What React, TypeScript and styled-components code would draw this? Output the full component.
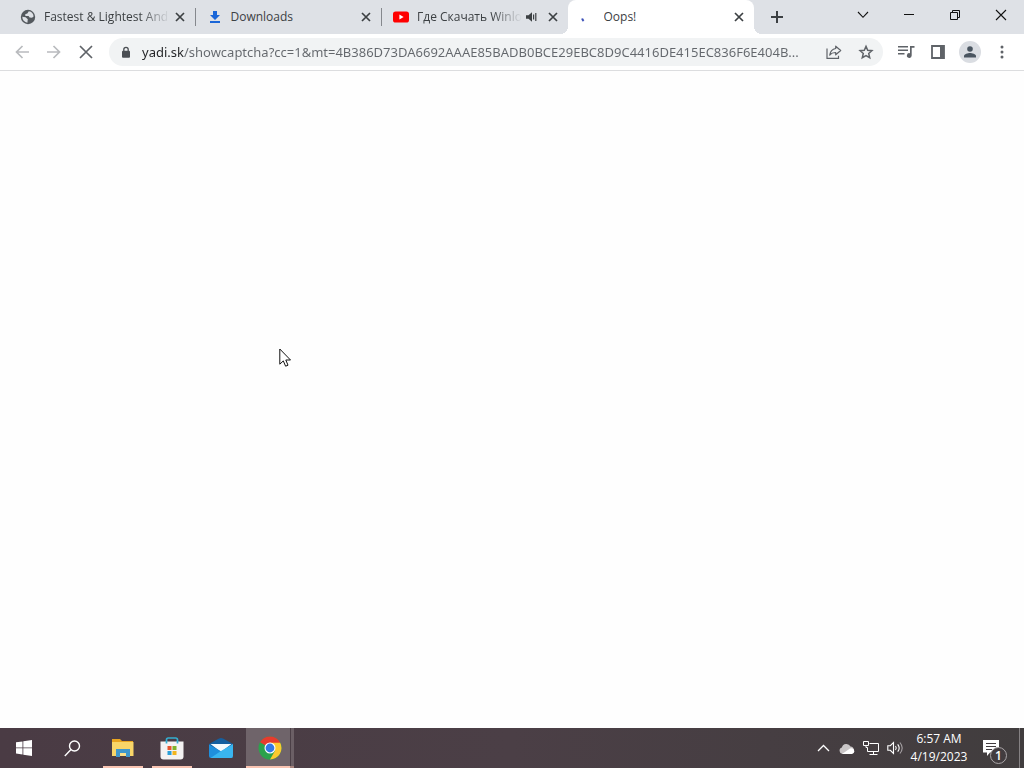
import React from "react";
import styled, { createGlobalStyle } from "styled-components";

const GlobalStyle = createGlobalStyle`
  * { box-sizing: border-box; }
  html, body, #root { height: 100%; }
  body {
    margin: 0;
    overflow: hidden;
    background: #fefefe;
    font-family: "Open Sans", "Noto Sans", sans-serif;
    font-size: 12px;
  }
  button { font: inherit; border: 0; padding: 0; background: none; color: inherit; }
  svg { display: block; flex: none; }
`;

const Desktop = styled.div`
  height: 100vh;
  display: flex;
  flex-direction: column;
`;

const TabStrip = styled.header`
  height: 34px;
  flex: none;
  display: flex;
  background: #dee1e6;
  padding-left: 8px;
`;

const Tabs = styled.div`
  display: flex;
  flex: 0 1 746px;
  min-width: 0;
`;

const Tab = styled.div<{ $active?: boolean }>`
  flex: 1 1 0;
  min-width: 0;
  display: flex;
  align-items: center;
  position: relative;
  padding: 0 7px 0 12px;
  color: #3c4043;
  background: ${(p) => (p.$active ? "#fff" : "transparent")};
  border-radius: 8px 8px 0 0;

  &::before, &::after {
    content: "";
    display: ${(p) => (p.$active ? "block" : "none")};
    position: absolute;
    bottom: 0;
    width: 8px;
    height: 8px;
  }
  &::before {
    left: -8px;
    background: radial-gradient(circle at 0 0, transparent 8px, #fff 8px);
  }
  &::after {
    right: -8px;
    background: radial-gradient(circle at 100% 0, transparent 8px, #fff 8px);
  }
`;

const Divider = styled.span`
  position: absolute;
  right: -1px;
  top: 8px;
  width: 1px;
  height: 18px;
  background: #85888d;
`;

const TabTitle = styled.button<{ $fade?: boolean }>`
  flex: 1;
  min-width: 0;
  margin-left: 8px;
  line-height: 18px;
  text-align: left;
  white-space: nowrap;
  overflow: hidden;
  mask-image: ${(p) =>
    p.$fade ? "linear-gradient(to right, #000 calc(100% - 32px), transparent calc(100% - 2px))" : "none"};
`;

const TabIconButton = styled.button`
  width: 16px;
  height: 16px;
  display: grid;
  place-items: center;
  flex: none;

  & + & { margin-left: 5px; }
`;

const NewTab = styled.button`
  width: 28px;
  margin-left: 9px;
  display: grid;
  place-items: center;
  color: #3c4043;
`;

const WindowButtons = styled.div`
  display: flex;
  height: 29px;
  margin-left: auto;
`;

const WindowButton = styled.button`
  width: 46px;
  display: grid;
  place-items: center;
  color: #111;
`;

const Toolbar = styled.nav`
  height: 37px;
  flex: none;
  display: flex;
  align-items: center;
  padding: 0 6px;
  background: #fff;
  border-bottom: 1px solid #dcdddf;
`;

const ToolButton = styled.button<{ $muted?: boolean }>`
  width: 32px;
  height: 28px;
  display: grid;
  place-items: center;
  flex: none;
  color: ${(p) => (p.$muted ? "#b9bbbe" : "#5f6368")};
`;

const Omnibox = styled.form`
  flex: 1;
  min-width: 0;
  height: 28px;
  margin: 0 7px;
  padding: 0 1px 0 8px;
  display: flex;
  align-items: center;
  border-radius: 14px;
  background: #f1f3f4;
`;

const SiteInfo = styled.button`
  width: 17px;
  height: 24px;
  margin-right: 8px;
  display: grid;
  place-items: center;
  flex: none;
  color: #4b4f54;
`;

const Address = styled.input`
  flex: 1;
  min-width: 0;
  height: 24px;
  margin-right: 4px;
  padding: 0;
  border: 0;
  outline: 0;
  font: 13px "Noto Sans", sans-serif;
  color: transparent;
  background: linear-gradient(to right, #202124 42px, #63676c 42px);
  background-clip: text;
  text-overflow: ellipsis;
`;

const Avatar = styled.span`
  width: 22px;
  height: 22px;
  display: grid;
  place-items: center;
  border-radius: 50%;
  background: #dadde2;
`;

const Page = styled.main`
  flex: 1;
  position: relative;
  background: #fefefe;
`;

const Pointer = styled.svg`
  position: absolute;
  left: 279px;
  top: 277px;
`;

const Taskbar = styled.footer`
  height: 40px;
  flex: none;
  display: flex;
  background: linear-gradient(to right, #4a3b44, #4b3f46 50%, #413d3e);
  color: #fff;
`;

const TaskButton = styled.button`
  width: 48px;
  display: grid;
  place-items: center;
  flex: none;
`;

const Apps = styled.div`
  display: flex;
  gap: 1px;
  margin-left: 3px;
`;

const appBackground = {
  idle: "none",
  open: "linear-gradient(#f9c4b2, #f9c4b2) center bottom / 40px 2px no-repeat",
  active: `
    linear-gradient(to right, #f9c4b2 44px, #a9857e 44px) left bottom / 100% 2px no-repeat,
    linear-gradient(to right, #6f646a 44px, #4b3f46 44px, #4b3f46 45px, #6b5f65 45px)`,
};

const AppButton = styled(TaskButton)<{ $state: keyof typeof appBackground }>`
  background: ${(p) => appBackground[p.$state]};
`;

const Tray = styled.div`
  display: flex;
  margin-left: auto;
`;

const TrayButton = styled.button`
  width: 24px;
  display: grid;
  place-items: center;
`;

const Clock = styled.button`
  width: 64px;
  line-height: 18px;
  text-align: center;
`;

const Notifications = styled.button`
  width: 48px;
  display: flex;
  align-items: center;
  padding-left: 12px;
  position: relative;
`;

const Count = styled.span`
  position: absolute;
  left: 19px;
  top: 19px;
  width: 17px;
  height: 17px;
  border: 1px solid #aaa6a8;
  border-radius: 50%;
  background: #423c3f;
  font-weight: 600;
  line-height: 15px;
  text-align: center;
`;

const ShowDesktop = styled.button`
  width: 5px;
  border-left: 1px solid #858183;
`;

const CloseTab = () => (
  <TabIconButton aria-label="Close tab">
    <svg width="10" height="10" viewBox="0 0 10 10" stroke="#3c4043" strokeWidth="1.7">
      <path d="M1 1l8 8M9 1L1 9" />
    </svg>
  </TabIconButton>
);

const Globe = () => (
  <svg width="16" height="16" viewBox="0 0 16 16">
    <circle cx="8" cy="8" r="7.2" fill="#54595e" />
    <path d="M8.800 2.300L7.300 4.600 5.200 5.300 5.400 7H8.600L9.600 8.600 12 8.800 13.600 7.600A5.700 5.700 0 0 0 8.800 2.300z" fill="#dee1e6" />
    <path d="M2.300 7.800L5.600 8.200 7.800 10.200 7.400 13.700A5.800 5.800 0 0 1 2.300 7.800z" fill="#dee1e6" />
  </svg>
);

const Download = () => (
  <svg width="16" height="16" viewBox="0 0 16 16" fill="#1a66d8">
    <path d="M6 2h4v4h3l-5 5-5-5h3zM3 12h10v2H3z" />
  </svg>
);

const YouTube = () => (
  <svg width="16" height="16" viewBox="0 0 16 16">
    <rect y="2.500" width="16" height="11" rx="2.600" fill="#f00" />
    <path d="M6.400 5.600v4.800l4.200-2.400z" fill="#fff" />
  </svg>
);

const Spinner = () => (
  <svg width="16" height="16" viewBox="0 0 16 16" fill="none" stroke="#3c50b8" strokeWidth="2">
    <path d="M2.100 9.500q.4 1.300 1.500 2.500" />
  </svg>
);

const ADDRESS =
  "yadi.sk/showcaptcha?cc=1&mt=4B386D73DA6692AAAE85BADB0BCE29EBC8D9C4416DE415EC836F6E404B...";

export default function App() {
  return (
    <>
      <GlobalStyle />
      <Desktop>
        <TabStrip>
          <Tabs>
            <Tab>
              <Globe />
              <TabTitle $fade>Fastest &amp; Lightest And</TabTitle>
              <CloseTab />
              <Divider />
            </Tab>
            <Tab>
              <Download />
              <TabTitle>Downloads</TabTitle>
              <CloseTab />
              <Divider />
            </Tab>
            <Tab>
              <YouTube />
              <TabTitle $fade>Где Скачать Winlo</TabTitle>
              <TabIconButton aria-label="Mute tab">
                <svg width="12" height="10" viewBox="0 0 12 10" fill="#3c4043">
                  <path d="M0 3.200h2.500L6 .3v9.400L2.500 6.800H0z" />
                  <path d="M7.600 2.600v4.800M9.800 1v8" stroke="#3c4043" strokeWidth="1.200" />
                </svg>
              </TabIconButton>
              <CloseTab />
            </Tab>
            <Tab $active>
              <Spinner />
              <TabTitle>Oops!</TabTitle>
              <CloseTab />
            </Tab>
          </Tabs>
          <NewTab aria-label="New tab">
            <svg width="12" height="12" viewBox="0 0 12 12" stroke="currentColor" strokeWidth="2">
              <path d="M6 0v12M0 6h12" />
            </svg>
          </NewTab>
          <WindowButtons>
            <WindowButton aria-label="Search tabs">
              <svg width="12" height="8" viewBox="0 0 12 8" fill="none" stroke="currentColor" strokeWidth="1.100">
                <path d="M1 1l5 5.300L11 1" />
              </svg>
            </WindowButton>
            <WindowButton aria-label="Minimize">
              <svg width="10" height="1" viewBox="0 0 10 1" fill="currentColor">
                <path d="M0 0h10v1H0z" />
              </svg>
            </WindowButton>
            <WindowButton aria-label="Restore">
              <svg width="10" height="10" viewBox="0 0 10 10" fill="none" stroke="currentColor">
                <path d="M.5 2.500h7v7h-7zM2.500 2.500v-2h7v7h-2" />
              </svg>
            </WindowButton>
            <WindowButton aria-label="Close">
              <svg width="12" height="12" viewBox="0 0 12 12" stroke="currentColor" strokeWidth="1.100">
                <path d="M1 1l10 10M11 1L1 11" />
              </svg>
            </WindowButton>
          </WindowButtons>
        </TabStrip>

        <Toolbar>
          <ToolButton $muted aria-label="Back">
            <svg width="14" height="14" viewBox="0 0 14 14" fill="none" stroke="currentColor" strokeWidth="1.700">
              <path d="M14 7H1.500M7.500 1L1.500 7l6 6" />
            </svg>
          </ToolButton>
          <ToolButton $muted aria-label="Forward">
            <svg width="14" height="14" viewBox="0 0 14 14" fill="none" stroke="currentColor" strokeWidth="1.700">
              <path d="M0 7h12.500M6.500 1l6 6-6 6" />
            </svg>
          </ToolButton>
          <ToolButton aria-label="Stop loading">
            <svg width="14" height="14" viewBox="0 0 14 14" stroke="currentColor" strokeWidth="1.700">
              <path d="M1 1l12 12M13 1L1 13" />
            </svg>
          </ToolButton>
          <Omnibox onSubmit={(e) => e.preventDefault()}>
            <SiteInfo type="button" aria-label="View site information">
              <svg width="10" height="13" viewBox="0 0 10 13">
                <path d="M2.800 5.500V3.500a2.200 2.200 0 0 1 4.400 0v2" fill="none" stroke="currentColor" strokeWidth="1.300" />
                <rect x="1" y="4.800" width="8" height="7" rx="1" fill="currentColor" />
              </svg>
            </SiteInfo>
            <Address aria-label="Address and search bar" defaultValue={ADDRESS} spellCheck={false} />
            <ToolButton type="button" aria-label="Share this page">
              <svg width="16" height="16" viewBox="0 0 16 16" fill="none" stroke="currentColor" strokeWidth="1.200">
                <path d="M1 4.500v9.800h11.500v-2.500" />
                <path d="M9.700 2.200l5 4.300-5 4.300V8.500c-2.700-.1-4.500.7-6 2.500.5-3.500 2.400-5.900 6-6.500z" strokeLinejoin="round" />
              </svg>
            </ToolButton>
            <ToolButton type="button" aria-label="Bookmark this tab">
              <svg width="16" height="16" viewBox="0 0 16 16" fill="none" stroke="currentColor" strokeWidth="1.500">
                <path d="M8 2.400l1.700 3.900 4.200.4-3.200 2.800 1 4.200L8 11.500l-3.700 2.200 1-4.200-3.200-2.800 4.200-.4z" />
              </svg>
            </ToolButton>
          </Omnibox>
          <ToolButton aria-label="Control your media">
            <svg width="17" height="14" viewBox="0 0 17 14" fill="currentColor">
              <path d="M0 1h10v1.600H0zM0 4.500h10v1.600H0zM0 8h6.500v1.600H0z" />
              <path d="M12 1h4.500v1.800h-2.800v7.700a2.400 2.400 0 1 1-1.700-2.300z" />
            </svg>
          </ToolButton>
          <ToolButton aria-label="Side panel">
            <svg width="14" height="14" viewBox="0 0 14 14">
              <path d="M1 1h12v12H1z" fill="none" stroke="currentColor" strokeWidth="1.800" />
              <path d="M9 1h4v12H9z" fill="currentColor" />
            </svg>
          </ToolButton>
          <ToolButton aria-label="Profile">
            <Avatar>
              <svg width="12" height="12" viewBox="0 0 12 12" fill="#4a5560">
                <circle cx="6" cy="3" r="2.800" />
                <path d="M0 11.500V10c0-2 4-3 6-3s6 1 6 3v1.500z" />
              </svg>
            </Avatar>
          </ToolButton>
          <ToolButton aria-label="Customize and control">
            <svg width="4" height="14" viewBox="0 0 4 14" fill="currentColor">
              <circle cx="2" cy="2" r="1.500" />
              <circle cx="2" cy="7" r="1.500" />
              <circle cx="2" cy="12" r="1.500" />
            </svg>
          </ToolButton>
        </Toolbar>

        <Page>
          <Pointer width="13" height="20" viewBox="0 0 13 20" fill="#fff" stroke="#111">
            <path d="M.8 1v15.200l3.500-3.300 2.300 5.300 2.400-1-2.200-5.200h4.700z" />
          </Pointer>
        </Page>

        <Taskbar>
          <TaskButton aria-label="Start">
            <svg width="16" height="16" viewBox="0 0 16 16" fill="#fff">
              <path d="M0 2.300l6.500-.9v6.100H0zM7.300 1.300L16 0v7.500H7.300zM0 8.300h6.500v6.200L0 13.600zM7.300 8.300H16V16l-8.700-1.300z" />
            </svg>
          </TaskButton>
          <TaskButton aria-label="Search">
            <svg width="17" height="17" viewBox="0 0 17 17" fill="none" stroke="#fff" strokeWidth="1.400">
              <circle cx="10.500" cy="6" r="5" />
              <path d="M7 9.600L.8 16" />
            </svg>
          </TaskButton>
          <Apps>
            <AppButton $state="open" aria-label="File Explorer">
              <svg width="22" height="18" viewBox="0 0 22 18">
                <path d="M0 0h8l2 2h11v4H0z" fill="#e9a520" />
                <path d="M0 3h21.500v14H0z" fill="#f8d568" />
                <path d="M4 10h14v8h-4v-4H8v4H4z" fill="#3f97cb" />
                <path d="M8 14h6v3H8z" fill="#fbe08a" />
              </svg>
            </AppButton>
            <AppButton $state="open" aria-label="Microsoft Store">
              <svg width="24" height="24" viewBox="0 0 24 24">
                <path d="M6.500 7V3.800Q6.500 2 8.300 2h7.400q1.800 0 1.800 1.800V7" fill="none" stroke="#35aed0" strokeWidth="1.700" />
                <path d="M.5 5.500h23v15q0 3-3 3h-17q-3 0-3-3z" fill="#f4f2f2" />
                <path d="M6.500 5v2.500M17.500 5v2.500" stroke="#35aed0" strokeWidth="1.700" />
                <path d="M7.500 10h4v4h-4z" fill="#e8542c" />
                <path d="M12.500 10h4v4h-4z" fill="#7fb32b" />
                <path d="M7.500 15h4v4h-4z" fill="#2a9fd8" />
                <path d="M12.500 15h4v4h-4z" fill="#f2b51d" />
              </svg>
            </AppButton>
            <AppButton $state="idle" aria-label="Mail">
              <svg width="24" height="22" viewBox="0 0 24 22">
                <path d="M0 7L10 1.500Q12 .5 14 1.500L24 7v6H0z" fill="#155f9f" />
                <path d="M1.500 7h21L12 15z" fill="#f4fafd" />
                <path d="M0 7.500l24 13.500H2q-2 0-2-2z" fill="#1f8fdc" />
                <path d="M24 7v12q0 2-2 2H1.500L12 14z" fill="#39b5f0" />
              </svg>
            </AppButton>
            <AppButton $state="active" aria-label="Google Chrome">
              <svg width="24" height="24" viewBox="0 0 24 24">
                <circle cx="12" cy="12" r="11.500" fill="#2ba24c" />
                <path d="M12 12L2 6.200A11.500 11.500 0 0 1 22 6.200L22 7H12z" fill="#e63b2e" />
                <path d="M12 6.700h10.200A11.500 11.500 0 0 1 12 23.500l5-8.800z" fill="#fcc92f" />
                <circle cx="12" cy="12" r="5.500" fill="#fff" />
                <circle cx="12" cy="12" r="4.400" fill="#3478e6" />
              </svg>
            </AppButton>
          </Apps>
          <Tray>
            <TrayButton aria-label="Show hidden icons">
              <svg width="13" height="8" viewBox="0 0 13 8" fill="none" stroke="#fff" strokeWidth="1.300">
                <path d="M1 7l5.500-5.500L12 7" />
              </svg>
            </TrayButton>
            <TrayButton aria-label="OneDrive">
              <svg width="16" height="11" viewBox="0 0 16 11">
                <path d="M3.500 11a3.400 3.400 0 0 1-.6-6.600A4.600 4.600 0 0 1 11.500 3.500a3.900 3.900 0 0 1 1 7.500z" fill="#c9c5c6" />
                <path d="M3 11l8-5.500q2-.8 3.700.8Q16.500 10 12.800 11z" fill="#fff" />
              </svg>
            </TrayButton>
            <TrayButton aria-label="Network">
              <svg width="17" height="14" viewBox="0 0 17 14" fill="none" stroke="#fff">
                <path d="M6.500 2.500h9v8h-11v-4M10.500 10.500v3M6.500 13.500h8M.5.500h5v4h-5zM3 4.500v2h1.500" />
              </svg>
            </TrayButton>
            <TrayButton aria-label="Volume">
              <svg width="17" height="14" viewBox="0 0 17 14" fill="none" stroke="#fff" strokeWidth="1.100">
                <path d="M.8 4.700h2.500L6.500 1.500v11L3.300 9.300H.8z" />
                <path d="M8.500 5q1.500 2 0 4M10.700 3.300q3 3.700 0 7.400" />
                <path d="M12.900 1.500q4.600 5.500 0 11" stroke="#a5a0a3" />
              </svg>
            </TrayButton>
            <Clock>
              6:57 AM
              <br />
              4/19/2023
            </Clock>
            <Notifications aria-label="Notifications, 1 new">
              <svg width="16" height="17" viewBox="0 0 16 17">
                <path d="M0 0h16v12.500H7L4 16v-3.500H0z" fill="#fff" />
                <path d="M3 3.500h10M3 6.500h10M3 9.500h6" stroke="#423c3f" />
              </svg>
              <Count>1</Count>
            </Notifications>
            <ShowDesktop aria-label="Show desktop" />
          </Tray>
        </Taskbar>
      </Desktop>
    </>
  );
}
